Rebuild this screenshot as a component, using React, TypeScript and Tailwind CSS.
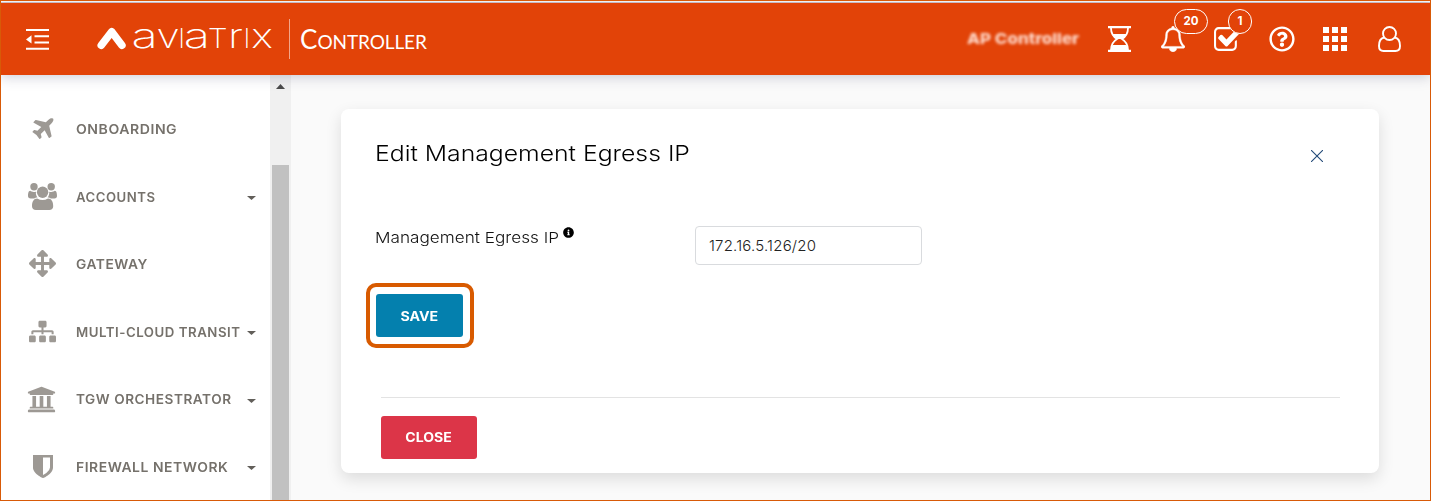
import type { ReactNode } from "react";
import { FaArrowsAlt, FaInfoCircle, FaRegQuestionCircle, FaSitemap, FaUniversity } from "react-icons/fa";

function PlaneIcon() {
  return (
    <svg className="h-[21px] w-[22px]" viewBox="192 190 1408 1408" fill="currentColor">
      <path d="M1568 224q44 52 12 148t-108 172l-161 161 160 696q5 19-12 33l-128 96q-7 6-19 6-4 0-7-1-15-3-21-16l-279-508-259 259 53 194q5 17-8 31l-96 96q-9 9-23 9h-2q-15-2-24-13l-189-252-252-189q-11-7-13-23-1-13 9-25l96-97q9-9 23-9 6 0 8 1l194 53 259-259-508-279q-14-8-17-24-2-16 9-27l128-128q14-13 30-8l665 159 160-160q76-76 172-108t148 12z" />
    </svg>
  );
}

function UsersIcon() {
  return (
    <svg className="h-[27px] w-[29px]" viewBox="0 0 29 27" fill="currentColor">
      <circle cx="6" cy="3.700" r="3.700" />
      <circle cx="23.200" cy="3.700" r="3.700" />
      <circle cx="14.600" cy="9.300" r="5.700" />
      <path d="M2.200 7.800c1.400 1 3 1.500 5.800.9-.4 2.300.2 4.100 1.500 5.700-1.500.1-2.500.4-3.500 1.100H2.700C1 15.500 0 14.600 0 13c0-2 .4-5.200 2.200-5.200zM26.800 7.800c-1.400 1-3 1.500-5.600.9.300 2.300-.3 4.100-1.600 5.700 1.500.1 2.500.4 3.500 1.100h3.300c1.700 0 2.600-.9 2.600-2.500 0-2-.4-5.200-2.200-5.200z" />
      <path d="M9.200 15.600c3.500 2 7.300 2 10.800 0 3.500 0 5.200 3.300 5.200 7.600 0 2.400-1.500 3.800-3.900 3.800H8C5.500 27 4 25.600 4 23.200c0-4.300 1.700-7.600 5.200-7.600z" />
    </svg>
  );
}

function ShieldIcon() {
  return (
    <svg className="h-[23px] w-[20px]" viewBox="256 128 1280 1531" preserveAspectRatio="none" fill="currentColor">
      <path d="M1344 960V290H896v1167q119-63 213-137 235-184 235-360zm192-832v832q0 86-33.5 170.5T1419 1281t-118 127.5-126.500 103T1055 1586t-89.500 47-42.500 20q-12 6-26 6t-26-6q-16-7-42.500-20T739 1586t-119.500-74.500-126.500-103T375 1281t-85.500-150.500T256 960V128z" />
    </svg>
  );
}

function BellIcon() {
  return (
    <svg className="h-[26px] w-[24px]" viewBox="64 0 1664 1792" fill="currentColor" stroke="currentColor" strokeWidth="30">
      <path d="M246 1408h1300q-266-300-266-832 0-51-24-105t-69-103-121.500-80.500T896 256t-169.500 31.500T605 368t-69 103-24 105q0 532-266 832zm1482 0q0 52-38 90t-90 38h-448q0 106-75 181t-181 75-181-75-75-181H192q-52 0-90-38t-38-90q50-42 91-88t85-119.500 74.500-158.500 50-206T384 576q0-152 117-282.500T808 135q-8-19-8-39 0-40 28-68t68-28 68 28 28 68q0 20-8 39 190 28 307 158.500T1408 576q0 139 19.500 258t50 206 74.500 158.500 85 119.500 91 88z" />
    </svg>
  );
}

function CheckIcon() {
  return (
    <svg className="h-[24px] w-[27px]" viewBox="64 128 1663 1408" preserveAspectRatio="none" fill="currentColor">
      <path d="M1472 930v318q0 119-84.500 203.500T1184 1536H352q-119 0-203.500-84.500T64 1248V416q0-119 84.500-203.500T352 128h832q63 0 117 25 15 7 18 23 3 17-9 29l-49 49q-10 10-23 10-3 0-9-2-23-6-45-6H352q-66 0-113 47t-47 113v832q0 66 47 113t113 47h832q66 0 113-47t47-113V994q0-13 9-22l64-64q10-10 23-10 6 0 12 3 20 8 20 29zm231-489l-814 814q-24 24-57 24t-57-24l-430-430q-24-24-24-57t24-57l110-110q24-24 57-24t57 24l263 263 647-647q24-24 57-24t57 24l110 110q24 24 24 57t-24 57z" />
    </svg>
  );
}

function HourglassIcon() {
  return (
    <svg className="h-[26px] w-[23px]" viewBox="0 0 23 26" fill="none" stroke="currentColor">
      <path d="M0 1.2h23M0 24.8h23" strokeWidth="2.2" />
      <path d="M3 2c0 6 2 8.500 6 11-4 2.500-6 5-6 11M20 2c0 6-2 8.500-6 11 4 2.500 6 5 6 11" strokeWidth="1.8" />
      <path d="M4.500 8h14c-1 2-2.500 3.500-4.500 5h-5c-2-1.500-3.500-3-4.500-5zM3 24c0-2 .5-3.500 1.500-5h14c1 1.500 1.500 3 1.500 5z" fill="currentColor" stroke="none" />
    </svg>
  );
}

function GridIcon() {
  return (
    <svg className="h-6 w-6" viewBox="0 0 24 24" fill="currentColor">
      <path d="M0 0h6v6H0zM9 0h6v6H9zM18 0h6v6h-6zM0 9h6v6H0zM9 9h6v6H9zM18 9h6v6h-6zM0 18h6v6H0zM9 18h6v6H9zM18 18h6v6h-6z" />
    </svg>
  );
}

function UserIcon() {
  return (
    <svg className="h-[26px] w-[23px]" viewBox="0 0 23 26" fill="none" stroke="currentColor" strokeWidth="1.9">
      <circle cx="11.500" cy="7.500" r="6.500" />
      <path d="M6.300 11.500C2.500 12 1 15 1 20c0 3 1.500 5 4.500 5h12c3 0 4.500-2 4.500-5 0-5-1.500-8-5.300-8.500" />
    </svg>
  );
}

function OutdentIcon() {
  return (
    <svg className="h-[21px] w-[23px]" viewBox="0 0 23 21" fill="currentColor">
      <path d="M0 0h23v2H0zM8.500 6.300H23v2H8.500zM8.500 12.500H23v2H8.500zM0 18.800h23v2H0zM0 10.400l5.500-4.200v8.400z" />
    </svg>
  );
}

function Logo() {
  return (
    <svg className="h-[60px] w-[178px] overflow-visible" viewBox="97 9 178 60" fill="white">
      <path d="M101.300 45.300L111.700 31.700 121.900 45.300" fill="none" stroke="white" strokeWidth="7.600" strokeLinecap="round" strokeLinejoin="round" />
      <g className="font-['Inter',sans-serif] text-[35px] font-extralight">
        <text transform="translate(131.600 48) scale(1.400 1)">a</text>
        <text transform="translate(156.500 48) scale(1.200 1)">v</text>
        <text transform="translate(178.300 48)" className="text-[26.500px]">I</text>
        <text transform="translate(183.800 48) scale(1.400 1)">a</text>
        <text transform="translate(207.800 48) scale(1.200 1)" className="text-[26.500px]">T</text>
        <text transform="translate(228 48) scale(1.250 1)">r</text>
        <text transform="translate(243.500 48)" className="text-[26.500px]">I</text>
        <text transform="translate(251.300 48) scale(1.200 1)">x</text>
      </g>
    </svg>
  );
}

type Item = { label: string; icon: ReactNode; menu: boolean; fit: string };

const items: Item[] = [
  { label: "ONBOARDING", icon: <PlaneIcon />, menu: false, fit: "scale-x-[1.083]" },
  { label: "ACCOUNTS", icon: <UsersIcon />, menu: true, fit: "scale-x-[1.013]" },
  { label: "GATEWAY", icon: <FaArrowsAlt className="size-[27px]" />, menu: false, fit: "scale-x-[1.06]" },
  { label: "MULTI-CLOUD TRANSIT", icon: <FaSitemap className="size-[27px]" />, menu: true, fit: "scale-x-[1.02]" },
  { label: "TGW ORCHESTRATOR", icon: <FaUniversity className="mr-0.5 size-[29px]" />, menu: true, fit: "scale-x-[1.047]" },
  { label: "FIREWALL NETWORK", icon: <ShieldIcon />, menu: true, fit: "scale-x-[1.07]" },
];

function Badge({ children, className }: { children: ReactNode; className: string }) {
  return (
    <span className={`absolute flex h-[25px] items-center justify-center rounded-full border border-white bg-[#e24308] text-[11.500px] font-bold ${className}`}>
      {children}
    </span>
  );
}

export default function App() {
  return (
    <div className="flex h-[501px] w-[1431px] flex-col overflow-hidden border border-[#d85a08] bg-[#fafafa] font-['Inter',sans-serif]">
      <div className="h-0.5 shrink-0 border-b border-[#d3c8cc] bg-white" />
      <header className="z-10 flex h-[72px] shrink-0 items-center bg-[#e24308] text-white shadow-[0_2px_12px_rgba(60,60,100,0.25)]">
        <div className="ml-[25px] w-[71px]"><OutdentIcon /></div>
        <Logo />
        <div className="ml-[14px] h-10 w-px bg-[#f3a589]" />
        <div className="ml-[10px] flex items-baseline pt-0.5 font-['Lato',sans-serif]">
          <span className="text-[26px] leading-8">C</span>
          <span className="text-[19px] leading-8 -tracking-[0.100px]">ONTROLLER</span>
        </div>
        <div className="ml-auto mr-[29px] flex items-center">
          <span className="mr-[29px] w-[112px] whitespace-nowrap text-[15px] font-extrabold text-[#ffdacb] blur-[1.400px]">
            <span className="inline-block origin-left scale-x-[1.130]">AP Controller</span>
          </span>
          <div className="mr-[30px]"><HourglassIcon /></div>
          <div className="relative mr-[29px]">
            <BellIcon />
            <Badge className="-top-[17px] left-[13px] w-[34px]">20</Badge>
          </div>
          <div className="relative mr-[28px]">
            <CheckIcon />
            <Badge className="-top-[18px] left-[14px] w-[24px]">1</Badge>
          </div>
          <FaRegQuestionCircle className="mr-7 size-[26px]" />
          <div className="mr-[31px] flex"><GridIcon /></div>
          <UserIcon />
        </div>
      </header>

      <div className="flex min-h-0 flex-1">
        <nav className="flex w-[269px] shrink-0 flex-col bg-white pt-5">
          {items.map((item) => (
            <div key={item.label} className="flex h-[67.600px] shrink-0 items-center text-[#9d9994]">
              <div className="flex w-[84px] justify-center pr-px">{item.icon}</div>
              <div className="-ml-[9px] flex-1 whitespace-nowrap pt-0.5 text-[13px] font-semibold tracking-[0.500px] text-[#75716b]">
                <span className={`inline-block origin-left ${item.fit}`}>{item.label}</span>
              </div>
              {item.menu && (
                <svg className="mr-[14px] mt-[3px] h-1 w-[9px] text-[#625f5a]" viewBox="0 0 9 4" fill="currentColor"><path d="M0 0h9L4.500 4z" /></svg>
              )}
            </div>
          ))}
        </nav>
        <div className="flex w-[21px] shrink-0 flex-col items-center bg-[#f0f0f0]">
          <svg className="mt-[9px] h-[5px] w-[9px] shrink-0" viewBox="0 0 9 5" fill="#4a4a4a"><path d="M0 5h9L4.500 0z" /></svg>
          <div className="mt-[76px] w-[17px] flex-1 bg-[#c1c1c1]" />
        </div>
        <main className="flex-1 pl-[50px] pt-[34px]">
          <section className="flex h-[364px] w-[1038px] flex-col rounded-lg bg-white shadow-[0_6px_16px_rgba(0,0,0,0.12)]">
            <div className="flex h-[117px] items-start pl-[34px] pr-[56px] pt-[28px]">
              <h1 className="origin-left scale-x-[1.125] whitespace-nowrap text-[22px] font-light leading-8 text-black">Edit Management Egress IP</h1>
              <svg className="ml-auto mt-[13px] size-3" viewBox="0 0 12 12" fill="none" stroke="#234a78" strokeWidth="1.100"><path d="M0 0l12 12M12 0L0 12" /></svg>
            </div>
            <div className="flex pl-[34px]">
              <div className="flex w-[320px] items-start">
                <div className="-mt-px w-[188px]">
                  <span className="inline-block origin-left scale-x-[1.145] whitespace-nowrap text-[15px] font-light leading-6 text-[#111]">Management Egress IP</span>
                </div>
                <FaInfoCircle className="mt-[1px] size-[11px] text-black" />
              </div>
              <div className="flex h-[39px] w-[227px] items-center rounded border border-[#d9dbde] pl-[13px] pt-px text-[15px] font-light tracking-[0.200px] text-[#222]">172.16.5.126/20</div>
            </div>
            <div className="ml-[25px] mt-[18px] flex h-[65px] w-[108px] items-center rounded-[10px] border-4 border-[#d85a00] pl-[6px]">
              <button className="h-[43px] w-[87px] rounded-[3px] bg-[#0480ae] pt-0.5 text-[13px] font-bold text-white">
                <span className="inline-block scale-x-[1.090]">SAVE</span>
              </button>
            </div>
            <div className="ml-10 mt-[49px] h-px w-[959px] bg-[#e3e3e3]" />
            <button className="ml-10 mt-[18px] h-[43px] w-[96px] rounded-[3px] bg-[#dc3548] text-[13px] font-bold text-white">
              <span className="inline-block scale-x-[1.080]">CLOSE</span>
            </button>
          </section>
        </main>
      </div>
    </div>
  );
}
